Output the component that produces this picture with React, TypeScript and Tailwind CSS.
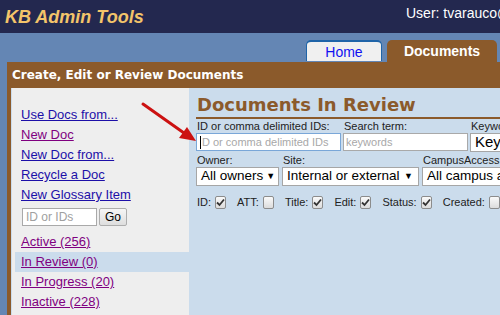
import React from "react";

const Check = ({ checked }: { checked: boolean }) => (
  <span className="inline-flex items-center justify-center w-[13px] h-[13px] rounded-[2px] border border-[#8c8c8c] bg-gradient-to-b from-[#fafafa] to-[#dcdcdc] ml-[4px]">
    {checked && (
      <svg width="9" height="9" viewBox="0 0 9 9">
        <path d="M1 4.5 L3.5 7 L8 1.5" stroke="#333" strokeWidth="1.8" fill="none" />
      </svg>
    )}
  </span>
);

const Select = ({ text, w, arrow = true, big = false }: { text: string; w: string; arrow?: boolean; big?: boolean }) => (
  <div className={`h-[19px] bg-white border border-[#a6a6a6] flex items-center justify-between pl-[4px] pr-[5px] text-black overflow-hidden whitespace-nowrap ${big ? "text-[15px]" : "text-[13.5px]"} ${w}`}>
    <span>{text}</span>
    {arrow && <span className="text-[9px] ml-[3px]">▼</span>}
  </div>
);

export default function App() {
  const links = [
    { t: "Use Docs from...", c: "text-[#1c0fa8]" },
    { t: "New Doc", c: "text-[#800080]" },
    { t: "New Doc from...", c: "text-[#1c0fa8]" },
    { t: "Recycle a Doc", c: "text-[#1c0fa8]" },
    { t: "New Glossary Item", c: "text-[#1c0fa8]" },
  ];
  const statuses = [
    { t: "Active (256)", hl: false },
    { t: "In Review (0)", hl: true },
    { t: "In Progress (20)", hl: false },
    { t: "Inactive (228)", hl: false },
  ];
  return (
    <div className="w-[500px] h-[315px] overflow-hidden bg-[#6486b4] relative" style={{ fontFamily: '"Liberation Sans", Arial, sans-serif' }}>
      <div className="h-[33px] bg-[#23284f] flex items-start justify-between">
        <div className="pl-[5px] pt-[6px] text-[18px] font-bold italic text-[#f3c46a] leading-[22px]">KB Admin Tools</div>
        <div className="pt-[5px] text-[14px] text-white whitespace-nowrap w-[94px] overflow-hidden leading-[16px]">User: tvarauco@</div>
      </div>
      <div className="h-[29px] flex items-end justify-end gap-[5px] pr-[3px]">
        <div className="w-[76px] h-[21px] rounded-t-[5px] border-t-2 border-x border-[#1f64a8] bg-[#f0f0f0] text-[#1010f0] text-[14px] flex items-center justify-center leading-none mb-[1px]">Home</div>
        <div className="w-[110px] h-[22px] rounded-t-[5px] bg-[#8b5a2b] text-white text-[14px] font-bold flex items-center justify-center leading-none">Documents</div>
      </div>
      <div className="ml-[7px] bg-[#8b5a2b] h-[260px]">
        <div className="h-[26px] flex items-center pl-[5px] text-white font-bold text-[12px]" style={{ fontFamily: '"DejaVu Sans", Verdana, sans-serif' }}>
          Create, Edit or Review Documents
        </div>
        <div className="ml-[4px] bg-[#cbdcec] h-full flex pl-[1px]">
          <div className="w-[177px] bg-[#eeeeee] pt-[17px] pl-[3px] text-[13px]">
            {links.map((l) => (
              <div key={l.t} className={`pl-[6px] h-[20px] leading-[20px] underline ${l.c}`}>{l.t}</div>
            ))}
            <div className="pl-[7px] flex items-center gap-[2px] mt-[3px] mb-[6px]">
              <div className="w-[75px] h-[18px] bg-white border border-[#a9a9a9] text-[12px] text-[#a0a0a0] pl-[3px] leading-[16px]">ID or IDs</div>
              <div className="w-[28px] h-[18px] border border-[#adadad] bg-gradient-to-b from-[#f6f6f6] to-[#dedede] rounded-[2px] text-[12px] text-black flex items-center justify-center">Go</div>
            </div>
            {statuses.map((s) => (
              <div key={s.t} className={`pl-[6px] h-[20px] leading-[19px] underline text-[#800080] ${s.hl ? "bg-[#cbdcec]" : ""}`}>{s.t}</div>
            ))}
          </div>
          <div className="flex-1 pl-[7px] pt-[6px] text-[#222] whitespace-nowrap overflow-hidden">
            <div className="text-[#8b5a2b] font-bold text-[18px] leading-[22px] border-b-2 border-[#8b5a2b] pb-[1px] pl-[1px]" style={{ fontFamily: '"DejaVu Sans", Verdana, sans-serif' }}>
              Documents In Review
            </div>
            <div className="flex gap-[2px] mt-[1px]">
              <div className="flex flex-col">
                <div className="text-[11px] leading-[13px] pl-[1px] h-[13px]">ID or comma delimited IDs:</div>
                <div className="w-[145px] h-[18px] bg-white border border-[#7aa7d8] text-[11px] text-[#a8a8a8] pl-[3px] leading-[16px] flex items-center"><span className="w-[1px] h-[13px] bg-black mr-[1px]"></span>D or comma delimited IDs</div>
              </div>
              <div className="flex flex-col">
                <div className="text-[11px] leading-[13px] pl-[1px] h-[13px]">Search term:</div>
                <div className="w-[125px] h-[18px] bg-white border border-[#a9a9a9] text-[11px] text-[#a8a8a8] pl-[2px] leading-[16px]">keywords</div>
              </div>
              <div className="flex flex-col">
                <div className="text-[11px] leading-[13px] pl-[1px] h-[13px]">Keywords:</div>
                <Select text="Keywords" w="w-[100px] h-[18px]" arrow={false} big />
              </div>
            </div>
            <div className="flex gap-[3px] mt-[2px]">
              <div className="flex flex-col">
                <div className="text-[11px] leading-[13px] pl-[1px] h-[13px]">Owner:</div>
                <Select text="All owners" w="w-[83px]" />
              </div>
              <div className="flex flex-col">
                <div className="text-[11px] leading-[13px] pl-[1px] h-[13px]">Site:</div>
                <Select text="Internal or external" w="w-[137px]" />
              </div>
              <div className="flex flex-col">
                <div className="text-[11px] leading-[13px] pl-[1px] h-[13px]">CampusAccess:</div>
                <Select text="All campus access" w="w-[140px]" arrow={false} />
              </div>
            </div>
            <div className="flex items-center text-[11px] mt-[8px] pl-[1px]">
              <span>ID:</span><Check checked />
              <span className="ml-[11px]">ATT:</span><Check checked={false} />
              <span className="ml-[11px]">Title:</span><Check checked />
              <span className="ml-[11px]">Edit:</span><Check checked />
              <span className="ml-[11px]">Status:</span><Check checked />
              <span className="ml-[11px]">Created:</span><Check checked={false} />
            </div>
          </div>
        </div>
      </div>
      <svg className="absolute left-0 top-0 pointer-events-none" width="500" height="315">
        <line x1="143" y1="104" x2="184" y2="133" stroke="#cc1111" strokeWidth="3" strokeLinecap="round" />
        <polygon points="196,141 179,138 187,127" fill="#cc1111" />
      </svg>
    </div>
  );
}
